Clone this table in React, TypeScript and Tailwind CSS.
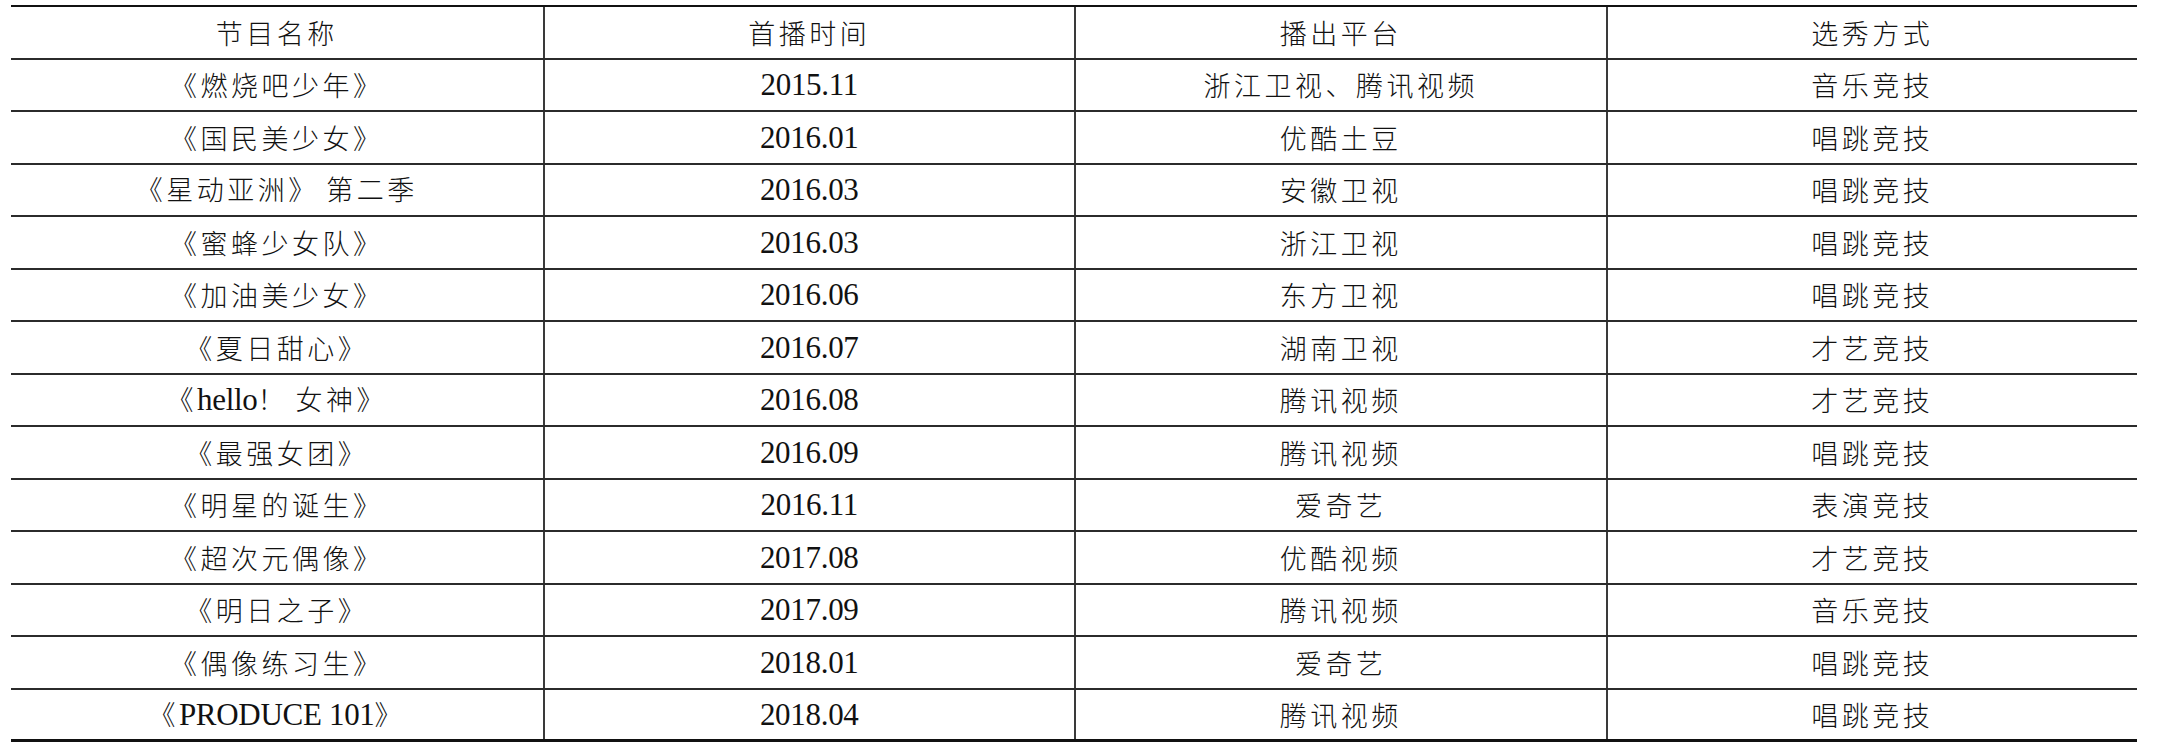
import React from "react";

const header = ["节目名称", "首播时间", "播出平台", "选秀方式"];

const rows: string[][] = [
  ["《燃烧吧少年》", "2015.11", "浙江卫视、腾讯视频", "音乐竞技"],
  ["《国民美少女》", "2016.01", "优酷土豆", "唱跳竞技"],
  ["《星动亚洲》 第二季", "2016.03", "安徽卫视", "唱跳竞技"],
  ["《蜜蜂少女队》", "2016.03", "浙江卫视", "唱跳竞技"],
  ["《加油美少女》", "2016.06", "东方卫视", "唱跳竞技"],
  ["《夏日甜心》", "2016.07", "湖南卫视", "才艺竞技"],
  ["《hello！ 女神》", "2016.08", "腾讯视频", "才艺竞技"],
  ["《最强女团》", "2016.09", "腾讯视频", "唱跳竞技"],
  ["《明星的诞生》", "2016.11", "爱奇艺", "表演竞技"],
  ["《超次元偶像》", "2017.08", "优酷视频", "才艺竞技"],
  ["《明日之子》", "2017.09", "腾讯视频", "音乐竞技"],
  ["《偶像练习生》", "2018.01", "爱奇艺", "唱跳竞技"],
  ["《PRODUCE 101》", "2018.04", "腾讯视频", "唱跳竞技"],
];

function Runs({ text }: { text: string }) {
  const parts = text.match(/[\u0000-\u007f]+|[^\u0000-\u007f]+/g) || [];
  return (
    <span className="whitespace-pre">
      {parts.map((p, i) =>
        /^[\u0000-\u007f]+$/.test(p) ? (
          <span
            key={i}
            className="text-[31px] font-['Liberation_Serif',serif] tracking-[-0.3px]"
          >
            {p}
          </span>
        ) : (
          <span
            key={i}
            className="text-[27px] font-light tracking-[3.5px] font-['Noto_Sans_CJK_SC','Noto_Sans_CJK_JP',sans-serif]"
          >
            {p}
          </span>
        )
      )}
    </span>
  );
}

function Row({
  cells,
  last,
}: {
  cells: string[];
  last?: boolean;
}) {
  return (
    <div
      className={
        last
          ? "grid grid-cols-4 h-[52.5px] border-b-[3px] border-[#111]"
          : "grid grid-cols-4 h-[52.5px] border-b-2 border-[#2b2b2b]"
      }
    >
      {cells.map((c, i) => (
        <div
          key={i}
          className={
            i === 0
              ? "flex items-center justify-center leading-none text-[#111]"
              : "flex items-center justify-center leading-none text-[#111] border-l-2 border-[#3a3a3a]"
          }
        >
          <Runs text={c} />
        </div>
      ))}
    </div>
  );
}

export default function App() {
  return (
    <div className="w-[2164px] h-[756px] bg-white pl-[11px] pt-[5px]">
      <div className="w-[2126px] border-t-2 border-[#111]">
        <Row cells={header} />
        {rows.map((r, i) => (
          <Row key={i} cells={r} last={i === rows.length - 1} />
        ))}
      </div>
    </div>
  );
}
